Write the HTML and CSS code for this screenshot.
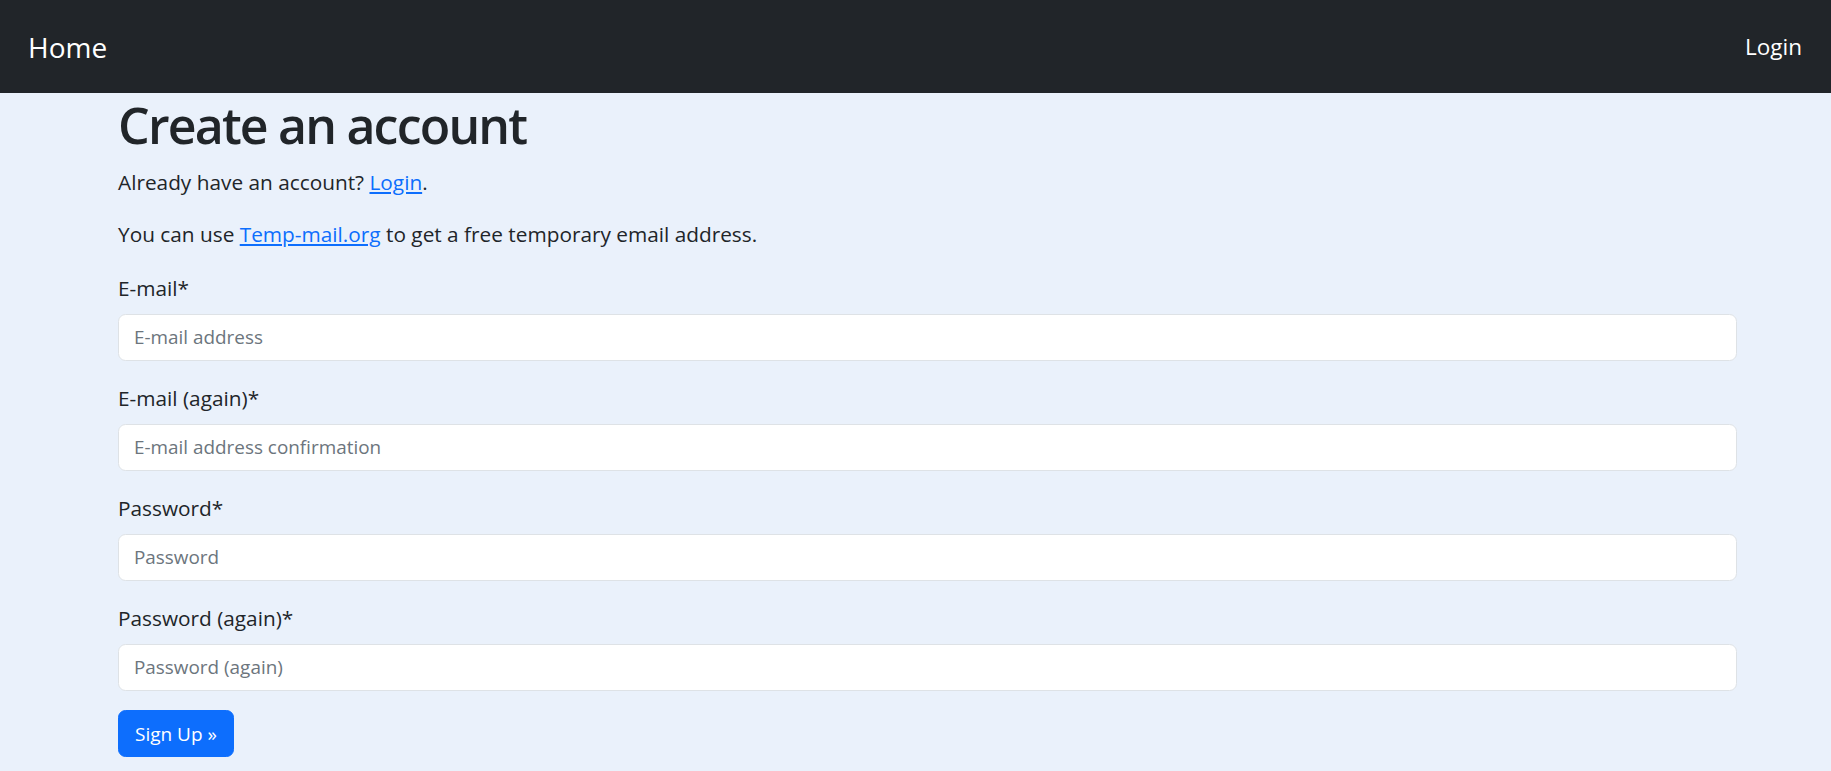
FILE: index.html
```html
<!DOCTYPE html>
<html lang="en">
<head>
<meta charset="utf-8">
<title>Create an account</title>
<link rel="stylesheet" href="styles.css">
</head>
<body>
<nav class="navbar">
  <a class="brand" href="#">Home</a>
  <a class="nav-link" href="#">Login</a>
</nav>
<main class="container">
  <h1 class="title">Create an account</h1>
  <p class="lead-line">Already have an account? <a href="#">Login</a>.</p>
  <p class="lead-line second">You can use <a href="#">Temp-mail.org</a> to get a free temporary email address.</p>
  <form class="signup">
    <div class="field">
      <label class="field-label" for="email">E-mail*</label>
      <input class="field-input" id="email" type="email" placeholder="E-mail address">
    </div>
    <div class="field">
      <label class="field-label" for="email2">E-mail (again)*</label>
      <input class="field-input" id="email2" type="email" placeholder="E-mail address confirmation">
    </div>
    <div class="field">
      <label class="field-label" for="pw">Password*</label>
      <input class="field-input" id="pw" type="password" placeholder="Password">
    </div>
    <div class="field last">
      <label class="field-label" for="pw2">Password (again)*</label>
      <input class="field-input" id="pw2" type="password" placeholder="Password (again)">
    </div>
    <button class="btn-primary" type="submit">Sign Up »</button>
  </form>
</main>
</body>
</html>
```
FILE: styles.css
```css
* { box-sizing: border-box; }
html, body {
  margin: 0;
  padding: 0;
}
body {
  background: #eaf1fb;
  color: #212529;
  font-family: "Open Sans", "Noto Sans", sans-serif;
  font-size: 20.8px;
  line-height: 30px;
}
a { color: #0d6efd; }
.navbar {
  height: 93px;
  background: #212529;
  display: flex;
  align-items: center;
  justify-content: space-between;
  padding: 0 29px 0 28px;
}
.brand {
  color: #fff;
  text-decoration: none;
  font-size: 28px;
  line-height: 36px;
}
.nav-link {
  color: #fff;
  text-decoration: none;
  font-size: 22.5px;
  line-height: 32px;
}
.container {
  padding: 2px 0 0 118px;
  width: 1737px;
}
.title {
  margin: 0 0 12px;
  font-size: 50px;
  line-height: 60px;
  font-weight: 600;
  letter-spacing: -1.8px;
}
.lead-line {
  margin: 0 0 22px;
}
.lead-line.second { margin-bottom: 24px; }
.signup { margin: 0; }
.field { margin-bottom: 22px; }
.field.last { margin-bottom: 19px; }
.field-label {
  display: block;
  margin-bottom: 10.5px;
}
.field-input {
  display: block;
  width: 100%;
  height: 47.5px;
  padding: 0 15px;
  font-family: inherit;
  font-size: 18.9px;
  color: #212529;
  background: #fff;
  border: 1px solid #dee2e6;
  border-radius: 7.5px;
}
.field-input::placeholder { color: #6c757d; opacity: 1; }
.btn-primary {
  height: 47px;
  padding: 0 16px;
  font-family: inherit;
  font-size: 19px;
  color: #fff;
  background: #0d6efd;
  border: 1px solid #0d6efd;
  border-radius: 7.5px;
}
```
